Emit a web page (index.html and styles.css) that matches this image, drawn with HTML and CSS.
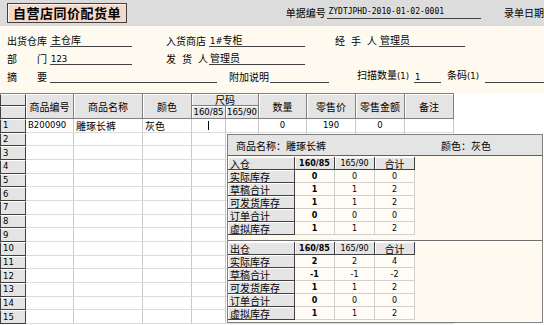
FILE: index.html
```html
<!DOCTYPE html>
<html lang="zh-CN">

<head>
    <meta charset="UTF-8">
    <title>自营店同价配货单</title>
    <link rel="stylesheet" href="styles.css">
</head>

<body>
    <div class="topbar">
        <div class="title">自营店同价配货单</div>
        <span class="bill-lbl">单据编号</span>
        <span class="line bill-no">ZYDTJPHD-2010-01-02-0001</span>
        <span class="date-lbl">录单日期</span>
    </div>

    <div class="form">
        <div class="frow">
            <span class="lbl w43">出货仓库</span><span class="line w82">主仓库</span>
            <span class="lbl w43 ml34">入货商店</span><span class="line w96"><i class="n">1#</i>专柜</span>
            <span class="lbl w44 ml30 spaced">经手人</span><span class="line w86">管理员</span>
        </div>
        <div class="frow">
            <span class="lbl w43 split"><b>部</b><b>门</b></span><span class="line w82"><i class="n">123</i></span>
            <span class="lbl w43 ml34 spaced">发货人</span><span class="line w96">管理员</span>
        </div>
        <div class="frow">
            <span class="lbl w43 split"><b>摘</b><b>要</b></span><span class="line w167"></span>
            <span class="lbl w41 ml12">附加说明</span><span class="line w59"></span>
            <span class="lbl w57 ml28">扫描数量<i class="n">(1)</i></span><span class="line w27"><i class="n">1</i></span>
            <span class="lbl w38 ml6">条码<i class="n">(1)</i></span><span class="line w59"></span>
        </div>
    </div>

    <div class="sheet">
        <div class="grid" id="grid">
            <div class="rn hd-rn"></div>
            <div class="hd tall">商品编号</div>
            <div class="hd tall">商品名称</div>
            <div class="hd tall">颜色</div>
            <div class="hd wide">尺码</div>
            <div class="hd tall">数量</div>
            <div class="hd tall">零售价</div>
            <div class="hd tall">零售金额</div>
            <div class="hd tall">备注</div>
            <div class="rn hd-rn"></div>
            <div class="hd n">160/85</div>
            <div class="hd n">165/90</div>

            <div class="rn">1</div>
            <div>B200090</div>
            <div class="cn">雕琢长裤</div>
            <div class="cn">灰色</div>
            <div><i class="caret"></i></div>
            <div></div>
            <div class="c">0</div>
            <div class="c">190</div>
            <div class="c">0</div>
            <div></div>
        </div>

        <div class="popup">
            <div class="pop-head">
                <span class="pop-name">商品名称：雕琢长裤</span>
                <span>颜色：灰色</span>
            </div>
            <div class="pop-sec">
                <div class="stock" id="stockIn"></div>
            </div>
            <div class="pop-sec second">
                <div class="stock" id="stockOut"></div>
            </div>
        </div>
    </div>

    <script>
        // empty detail rows 2..15
        const grid = document.getElementById('grid');
        for (let i = 2; i <= 15; i++) {
            grid.insertAdjacentHTML('beforeend', `<div class="rn">${i}</div>` + '<div></div>'.repeat(9));
        }

        const stockIn = [
            ['实际库存', 0, 0, 0],
            ['草稿合计', 1, 1, 2],
            ['可发货库存', 1, 1, 2],
            ['订单合计', 0, 0, 0],
            ['虚拟库存', 1, 1, 2]
        ];
        const stockOut = [
            ['实际库存', 2, 2, 4],
            ['草稿合计', -1, -1, -2],
            ['可发货库存', 1, 1, 2],
            ['订单合计', 0, 0, 0],
            ['虚拟库存', 1, 1, 2]
        ];

        function fillStock(el, title, rows) {
            let html = `<div class="sl">${title}</div><div class="sh n b">160/85</div>` +
                '<div class="sh n">165/90</div><div class="sh">合计</div>';
            rows.forEach(r => {
                html += `<div class="sl">${r[0]}</div><div class="b">${r[1]}</div><div>${r[2]}</div><div>${r[3]}</div>`;
            });
            el.innerHTML = html;
        }

        fillStock(document.getElementById('stockIn'), '入仓', stockIn);
        fillStock(document.getElementById('stockOut'), '出仓', stockOut);
    </script>
</body>

</html>
```

FILE: styles.css
```css
body {
    margin: 0;
    width: 544px;
    height: 325px;
    overflow: hidden;
    font-family: "Noto Sans CJK SC", sans-serif;
    font-size: 10px;
    color: #000;
    background: #fff;
}

i, b {
    font-style: normal;
    font-weight: normal;
}

.n {
    font-family: "DejaVu Sans", sans-serif;
    font-size: 8.5px;
}

/* top bar */
.topbar {
    display: flex;
    align-items: flex-start;
    height: 26px;
    padding-left: 7px;
    box-sizing: border-box;
    background: #dcdcdc;
    white-space: nowrap;
}

.title {
    margin-top: 3px;
    width: 121px;
    height: 20px;
    box-sizing: border-box;
    border: 1px solid #404040;
    box-shadow: inset 1px 1px #fff3ec;
    background: #f6d8c8;
    font-size: 13px;
    font-weight: bold;
    letter-spacing: 0.5px;
    line-height: 18px;
    text-align: center;
}

.bill-lbl {
    margin-left: 159px;
    margin-top: 7px;
    width: 42px;
    line-height: 12px;
}

.bill-no {
    margin-top: 5px;
    width: 155px;
    font-family: "DejaVu Sans Mono", monospace;
    font-size: 8px;
}

.date-lbl {
    margin-left: 23px;
    margin-top: 7px;
    line-height: 12px;
}

/* header form */
.form {
    height: 67px;
    padding-top: 3px;
    box-sizing: border-box;
    background: #fefaef;
}

.frow {
    display: flex;
    align-items: flex-end;
    height: 18px;
    padding-left: 7px;
    white-space: nowrap;
}

.lbl {
    line-height: 13px;
}

.line {
    height: 14px;
    line-height: 13px;
    padding-left: 1px;
    box-sizing: border-box;
    border-bottom: 1px solid #404040;
}

.split {
    display: flex;
    justify-content: space-between;
    padding-right: 3px;
    box-sizing: border-box;
}

.spaced {
    letter-spacing: 6px;
}

.w27 { width: 27px; }
.w38 { width: 38px; }
.w41 { width: 41px; }
.w43 { width: 43px; }
.w44 { width: 44px; }
.w57 { width: 57px; }
.w59 { width: 59px; }
.w82 { width: 82px; }
.w86 { width: 86px; }
.w96 { width: 96px; }
.w167 { width: 167px; }

.ml6 { margin-left: 6px; }
.ml12 { margin-left: 12px; }
.ml28 { margin-left: 28px; }
.ml30 { margin-left: 30px; }
.ml34 { margin-left: 34px; }

/* detail grid */
.sheet {
    position: relative;
    height: 232px;
    background: #fff;
}

.grid {
    display: grid;
    grid-template-columns: 26px 48px 69px 49px 34px 33px 48px 49px 49px 49px;
    grid-template-rows: 12px 13px;
    grid-auto-rows: 13.67px;
    width: 454px;
    border-top: 1px solid #808080;
    font-family: "DejaVu Sans", "Noto Sans CJK SC", sans-serif;
    font-size: 8.5px;
}

.grid > div {
    display: flex;
    align-items: center;
    padding-left: 2px;
    box-sizing: border-box;
    border-right: 1px solid #c8c8c8;
    border-bottom: 1px solid #dcdcdc;
    white-space: nowrap;
    line-height: 11px;
}

.grid .cn {
    font-family: "Noto Sans CJK SC", sans-serif;
    font-size: 10px;
}

.grid .c {
    justify-content: center;
    padding: 0;
}

.grid .hd {
    justify-content: center;
    padding: 0;
    background: #e4e4e4;
    border-right-color: #808080;
    border-bottom-color: #808080;
    box-shadow: inset 1px 1px #fff;
    font-family: "Noto Sans CJK SC", sans-serif;
    font-size: 10px;
}

.grid .hd.n {
    font-family: "DejaVu Sans", sans-serif;
    font-size: 8.5px;
}

.grid .tall {
    grid-row: span 2;
}

.grid .wide {
    grid-column: span 2;
}

.grid .rn {
    background: #e4e4e4;
    border: 1px solid #404040;
    border-top-color: #fff;
    font-size: 8.5px;
}

.caret {
    width: 1px;
    height: 9px;
    margin-left: 14px;
    background: #000;
}

/* stock popup */
.popup {
    position: absolute;
    left: 227px;
    top: 41px;
    width: 316px;
    height: 189px;
    box-sizing: border-box;
    border: 1px solid #808080;
    background: #fefaef;
}

.pop-head {
    display: flex;
    align-items: center;
    height: 21px;
    padding-left: 8px;
    box-sizing: border-box;
    border-bottom: 1px solid #606060;
    background: #e4e4e4;
    white-space: nowrap;
}

.pop-name {
    width: 205px;
}

.pop-sec {
    height: 84px;
    padding-top: 1px;
    box-sizing: border-box;
}

.pop-sec.second {
    height: auto;
    border-top: 1px solid #707070;
    box-shadow: inset 0 1px #fff;
}

.stock {
    display: grid;
    grid-template-columns: 67px 40px 40px 40px;
    grid-auto-rows: 13px;
    font-family: "DejaVu Sans", sans-serif;
    font-size: 8px;
}

.stock > div {
    display: flex;
    align-items: center;
    justify-content: center;
    box-sizing: border-box;
    border-right: 1px solid #d0d0d0;
    border-bottom: 1px solid #d0d0d0;
    background: #fffdf6;
    white-space: nowrap;
    line-height: 11px;
}

.stock .sl,
.stock .sh {
    background: #e4e4e4;
    border-right-color: #404040;
    border-bottom-color: #404040;
    box-shadow: inset 1px 1px #fff;
    font-family: "Noto Sans CJK SC", sans-serif;
    font-size: 10px;
}

.stock .sl {
    justify-content: flex-start;
    padding-left: 2px;
}

.stock .sh.n {
    font-family: "DejaVu Sans", sans-serif;
    font-size: 8px;
}

.stock .b {
    font-weight: bold;
}
```
